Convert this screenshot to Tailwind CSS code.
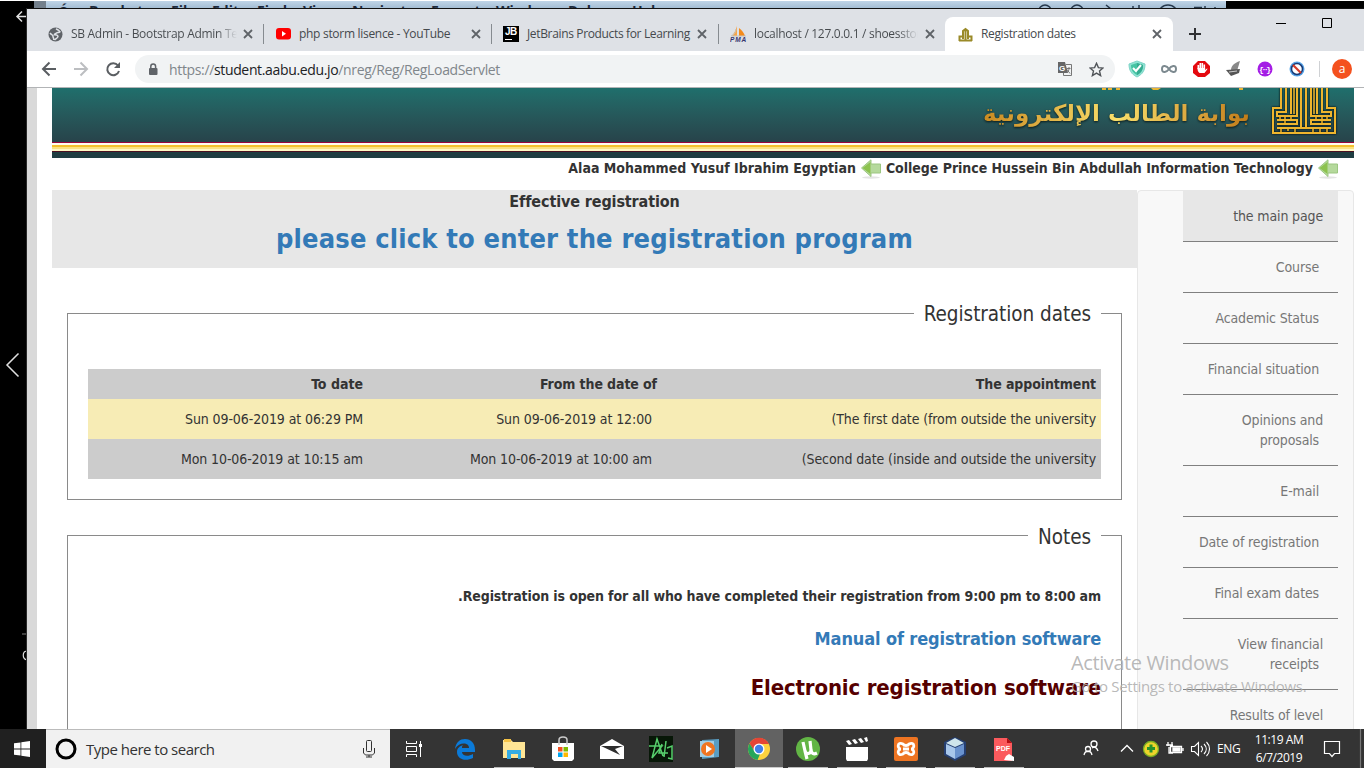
<!DOCTYPE html>
<html lang="en"><head><meta charset="utf-8"><title>Registration dates</title>
<script src="https://cdn.jsdelivr.net/npm/@tailwindcss/browser@4"></script></head>
<body class="bg-white">
<div class="relative flex h-[768px] w-[1366px] flex-col overflow-hidden bg-white pt-px font-['Open_Sans',sans-serif]">
  <!-- strip of the desktop behind the browser -->
  <div class="flex h-[7px] w-[1364px] shrink-0 overflow-hidden bg-black">
    <div class="ml-[34px] w-3 bg-[#74808c]"></div>
    <div class="relative w-[1180px] overflow-hidden bg-gradient-to-b from-[#c0d5e8] to-[#a5bed4] text-[14px] leading-[18px] font-bold text-[#1c2a3c]">
      <span class="absolute left-[12px] top-0.5">Ó</span><span class="absolute left-[43px] top-px">Brackets</span><span class="absolute left-[125px] top-px">File</span><span class="absolute left-[166px] top-px">Edit</span><span class="absolute left-[211px] top-px">Find</span><span class="absolute left-[257px] top-px">View</span><span class="absolute left-[306px] top-px">Navigate</span><span class="absolute left-[385px] top-px">Emmet</span><span class="absolute left-[450px] top-px">Window</span><span class="absolute left-[522px] top-px">Debug</span><span class="absolute left-[586px] top-px">Help</span>
      <svg class="absolute left-[985px] top-0" width="190" height="7" fill="none" stroke="#26384c" stroke-width="1.5"><circle cx="14" cy="10" r="6"/><circle cx="46" cy="10" r="6"/><path d="m75 4 5 4M102 5v3M108 4v4"/><circle cx="137" cy="14" r="10"/><path d="M163 6.500h8M174 5v4M184 6v2"/></svg>
    </div>
  </div>
  <div class="flex h-[721px] shrink-0">
    <!-- visible edge of the window underneath -->
    <aside class="flex w-[27px] shrink-0 flex-col overflow-hidden border-r border-[#2a2a2a] bg-black">
      <svg width="27" height="721" fill="none" stroke="#e0e0e0" stroke-width="1.5"><path d="M27 8.500H17m5-5-5 5 5 5"/><path d="M18.500 345.500 7 357l11.500 11.500"/><path stroke="#555" d="M22 626h5"/><path stroke-width="1.200" d="M27 643.500c-5-2-5 9 0 8"/></svg>
    </aside>
    <main class="flex w-[1337px] flex-col border-t border-[#111]">
      <!-- tab strip -->
      <div class="flex h-[42px] shrink-0 items-end bg-[#dee1e6] text-[12px] tracking-[-0.3px] text-[#45494d]">
        <div class="flex h-[34px] w-[237px] items-center pl-[21px]">
          <svg width="15" height="15" viewBox="0 0 15 15"><circle cx="7.500" cy="7.500" r="7" fill="#5f6368"/><path d="M8 1.800c1.500.8 3 1.500 4 3-1 1.200-2.500.2-3.500 1.200-1 1-2.200.5-2.200 1.800 2 .2 3.500.2 3.700 1.700-.2 1.500-2 2-3.500 3.500M2 6c1.500 2 3 1.500 3 3.500 0 1 1 1.500.8 3.500" stroke="#dee1e6" stroke-width="1.500" fill="none"/></svg>
          <span class="ml-2 w-[166px] overflow-hidden whitespace-nowrap bg-gradient-to-r from-[#45494d] from-88% to-transparent bg-clip-text text-transparent">SB Admin - Bootstrap Admin Template</span>
          <svg class="ml-[6px]" width="10" height="10"><path d="m1 1 8 8M9 1l-8 8" stroke="#5f6368" stroke-width="1.800"/></svg>
        </div>
        <div class="flex h-[34px] w-[228px] items-center"><i class="-ml-px h-5 w-px bg-[#868b90]"></i>
          <svg class="ml-3" width="15" height="12"><rect width="15" height="11.500" rx="3" fill="#f00"/><path d="m6 3 4 2.700L6 8.500z" fill="#fff"/></svg>
          <span class="ml-2 w-[166px] whitespace-nowrap">php storm lisence - YouTube</span>
          <svg class="ml-[6px]" width="10" height="10"><path d="m1 1 8 8M9 1l-8 8" stroke="#5f6368" stroke-width="1.800"/></svg>
        </div>
        <div class="flex h-[34px] w-[227px] items-center"><i class="-ml-px h-5 w-px bg-[#868b90]"></i>
          <div class="ml-[11px] flex h-4 w-4 flex-col items-start bg-black pl-[2px] font-['Liberation_Sans',sans-serif] text-[10px] leading-[11px] font-bold tracking-[-0.500px] text-white">JB<i class="mt-0.5 h-px w-[7px] bg-white"></i></div>
          <span class="ml-2 w-[165px] whitespace-nowrap tracking-[-0.350px]">JetBrains Products for Learning</span>
          <svg class="ml-[5px]" width="10" height="10"><path d="m1 1 8 8M9 1l-8 8" stroke="#5f6368" stroke-width="1.800"/></svg>
        </div>
        <div class="flex h-[34px] w-[226px] items-center"><i class="-ml-px h-5 w-px bg-[#868b90]"></i>
          <svg class="ml-[11px]" width="17" height="16"><path d="M7 0v10H2C4 7 6 4 7 0z" fill="#f7a64a"/><path d="M9 2c3 2 5 5 6 8H9z" fill="#f48b1c"/><path d="M1 10c3-1 5-4 5-7M2 10h14" stroke="#c8c2bc" fill="none"/><text x="0" y="16" font-family="Liberation Sans" font-size="6.500" font-weight="bold" font-style="italic" fill="#35356e" textLength="16">PMA</text></svg>
          <span class="ml-[7px] w-[164px] overflow-hidden whitespace-nowrap bg-gradient-to-r from-[#45494d] from-88% to-transparent bg-clip-text text-transparent">localhost / 127.0.0.1 / shoesstore</span>
          <svg class="ml-[7px]" width="10" height="10"><path d="m1 1 8 8M9 1l-8 8" stroke="#5f6368" stroke-width="1.800"/></svg>
        </div>
        <div class="flex h-[34px] w-[228px] items-center rounded-t-lg bg-white pl-[13px]">
          <svg width="15" height="15" fill="none" stroke="#9a8a28" stroke-width="2"><path d="M1.500 14V9.500h2.500M13.500 14V9.500H11M1 13.500h13M5 12V4l2.500-2L10 4v8M7.500 3v10"/></svg>
          <span class="ml-2 w-[165px] whitespace-nowrap tracking-[-0.350px]">Registration dates</span>
          <svg class="ml-[6px]" width="10" height="10"><path d="m1 1 8 8M9 1l-8 8" stroke="#5f6368" stroke-width="1.800"/></svg>
        </div>
        <svg class="ml-4 self-start" width="150" height="42" fill="none" stroke="#303134"><path d="M0 25h12M6 19v12" stroke-width="2"/><path d="M87 14.500h10M133.500 9.500h9v9h-9z" stroke="#000"/></svg>
      </div>
      <!-- toolbar -->
      <div class="flex h-[37px] shrink-0 items-center border-b border-[#b2b4b6] bg-white pl-[14px]">
        <svg width="82" height="18" fill="none" stroke="#5a5e62" stroke-width="2"><path d="M15 9H2m6.500-6.500L2 9l6.500 6.500"/><path d="M33 9h13m-6.500-6.500L46 9l-6.500 6.500" stroke="#bcbec1"/><path d="M77 5.500A6 6 0 1 0 78 11"/><path d="M79 2v6h-6z" fill="#5a5e62" stroke="none"/></svg>
        <div class="ml-[12px] flex h-7 w-[980px] items-center rounded-full bg-[#f1f3f4] pl-[13px]">
          <svg width="10" height="13"><rect x="1" y="5" width="8.500" height="7" rx="1" fill="#5f6368"/><path d="M2.800 5V3.500a2.400 2.400 0 0 1 4.800 0V5" fill="none" stroke="#5f6368" stroke-width="1.500"/></svg>
          <span class="ml-[11px] w-[879px] whitespace-nowrap text-[14px] tracking-[-0.350px] text-[#80868b]">https://<b class="font-normal text-[#202124]">student.aabu.edu.jo</b>/nreg/Reg/RegLoadServlet</span>
          <svg class="ml-[9px]" width="16" height="14"><path d="M1 0h7l3 11H1z" fill="#666"/><text x="2" y="8.500" font-family="Liberation Sans" font-size="8" font-weight="bold" fill="#fff">G</text><path d="M9 2.500h5.500v11H6.500V11" fill="none" stroke="#777"/><path d="M9.500 6.500h4M12 5v1.500c0 2-1 3-2 4m0-3 3 4" stroke="#777" fill="none"/></svg>
          <svg class="ml-[16px]" width="15" height="15"><path d="m7.500 1.300 1.900 4.300 4.600.4-3.500 3 1.100 4.600-4.100-2.500-4.100 2.500L4.500 9 1 6l4.600-.4z" fill="none" stroke="#505458" stroke-width="1.400"/></svg>
        </div>
        <svg class="ml-[12px]" width="230" height="22" viewBox="0 0 230 22">
          <path d="m10 3 8 3c0 6-2 10-8 13C4 16 2 12 2 6z" fill="#8fe3d2" stroke="#7fd4c8"/><path d="m10 5 6 2c0 5-2 8-6 10-4-2-6-5-6-10z" fill="#45c4a3"/><path d="m10 5 6 2c0 5-2 8-6 10z" fill="#35ab91"/><path d="m6 10 3 3 5-6" stroke="#fff" stroke-width="2" fill="none"/>
          <path d="M42 11c-2-3-7-5-7 0s5 3 7 0 7-5 7 0-5 3-7 0z" fill="none" stroke="#7c898f" stroke-width="2"/>
          <path d="M71 3h7l5 5v7l-5 4h-7l-5-4V8z" fill="#e4090f"/><path d="M71.300 11V7m2 4V5m2 6V5m2 6V6.500" stroke="#fff" stroke-width="1.600" fill="none"/><path d="M70.500 10h7.600v2l1.900-1.500c.8 0 .5 1-2.500 4.500h-5c-1.500-1-2-3-2-5z" fill="#fff"/>
          <path d="M113 3c-6 2-9 5-9 9l6 1z" fill="#888"/><path d="m99 12 14-1-1 4-8 3z" fill="#555"/><path d="m102 14 8-1" stroke="#ccc"/>
          <circle cx="138" cy="11" r="7.500" fill="#a41de5"/><text x="132" y="13.500" font-family="Liberation Mono" font-size="8" font-weight="bold" fill="#fff" textLength="12">{··}</text>
          <circle cx="170" cy="11" r="7.500" fill="#55a4e8"/><circle cx="170" cy="11" r="5.500" fill="#fff" stroke="#183a75" stroke-width="1.500"/><path d="m166 7 8 8" stroke="#d43b28" stroke-width="2.200"/>
          <path d="M192.500 3v16" stroke="#cfd1d4"/><circle cx="215" cy="11" r="10" fill="#f4511e"/><text x="215" y="15" text-anchor="middle" font-family="Open Sans" font-size="12" fill="#fff">a</text>
        </svg>
      </div>
      <!-- page -->
      <div class="flex h-[641px] overflow-hidden bg-white font-['DejaVu_Sans_Condensed','Noto_Sans',sans-serif] text-[#333]">
        <div class="w-[10px] shrink-0 bg-[#d9d9d9]"></div>
        <div class="ml-[15px] w-[1302px]">
          <header class="relative h-[54px] overflow-hidden bg-gradient-to-b from-[#1f6f6c] to-[#27434a]">
            <h1 dir="rtl" class="absolute top-[8px] right-[104px] whitespace-nowrap bg-gradient-to-r from-[#c98a20] via-[#f9e06a] to-[#c07b16] bg-clip-text font-['DejaVu_Sans',sans-serif] text-[23px] leading-[34px] font-bold text-transparent drop-shadow-[0_1px_1px_#0a1a1a]">بوابة الطالب الإلكترونية</h1>
            <svg class="absolute left-[1040px] top-0" width="160" height="4" fill="#e8b534"><path d="M10 0h4v2h-4zM16 0h4v2h-4zM24 0h4v2h-4zM59 0h10l-3 2h-5zM147 0h4v2h-4z"/></svg>
            <svg class="absolute right-[17px] top-0 drop-shadow-[0_0_1px_#000]" width="66" height="48" fill="none" stroke="#eeb52d" stroke-width="2"><path d="M10 0v20H2v25h62V20h-8V0M15 0v24H6v4h20V0M51 0v24h9v4H40V0M20 0v26M46 0v26M30 0v40M35 0v40M6 32h20v4H6M60 32H40v4h20M6 40h54"/><path stroke-width="1.500" d="M23 0v26M43 0v26M9 28v4M14 28v8M20 28v4M45 28v4M51 28v8M56 28v4M10 40v4M17 40v3M24 40v4M42 40v4M49 41v3M56 40v4"/></svg>
          </header>
          <div class="h-px bg-[#98063b]"></div><div class="h-[2px] bg-[#fffdf0]"></div><div class="h-[2px] bg-[#f5c12e]"></div><div class="h-[2px] bg-[#fbe281]"></div><div class="h-[2px] bg-[#fff9c4]"></div><div class="h-px bg-[#4a1020]"></div><div class="h-[6px] bg-[#1f3d42]"></div>
          <div class="flex h-[32px] justify-end pt-px pr-4 text-[14px] leading-[18px] font-bold tracking-[-0.030px]">
            <span class="whitespace-nowrap tracking-normal">Alaa Mohammed Yusuf Ibrahim Egyptian</span>
            <svg class="mx-[5px]" width="20" height="20"><ellipse cx="10" cy="18.500" rx="9" ry="1.200" fill="#e4e4e4"/><path d="M.5 9 10 .8V5h9.500v9H10v3.500z" fill="#b5d99c" stroke="#9cc681"/><path d="m1.500 9 8-6v12z" fill="#8cc24e"/></svg>
            <span class="whitespace-nowrap">College Prince Hussein Bin Abdullah Information Technology</span>
            <svg class="ml-[5px]" width="20" height="20"><ellipse cx="10" cy="18.500" rx="9" ry="1.200" fill="#e4e4e4"/><path d="M.5 9 10 .8V5h9.500v9H10v3.500z" fill="#b5d99c" stroke="#9cc681"/><path d="m1.500 9 8-6v12z" fill="#8cc24e"/></svg>
          </div>
          <div class="flex">
            <section class="w-[1085px]">
              <div class="h-[78px] bg-[#e7e7e7] pt-px text-center">
                <p class="text-[16px] leading-[22px] font-bold tracking-[-0.120px]">Effective registration</p>
                <p class="text-[27px] leading-[52px] font-bold tracking-[0.170px] text-[#337ab7]">please click to enter the registration program</p>
              </div>
              <fieldset class="mx-[15px] mt-[31px] h-[201px] border border-[#8a8a8a] px-5 text-[14px]" dir="rtl">
                <legend class="px-[10px] pt-px text-[20.5px] leading-[28px] tracking-[-0.050px]">Registration dates</legend>
                <table class="mt-[41px] w-[1013px] table-fixed text-right whitespace-nowrap tracking-[-0.100px]">
                  <colgroup><col class="w-[439px]"><col class="w-[294px]"><col></colgroup>
                  <thead><tr class="h-[30px] bg-[#ccc]"><th class="pr-[5px]">The appointment</th><th class="pr-[5px]">From the date of</th><th class="pr-[5px] tracking-normal">To date</th></tr></thead>
                  <tbody><tr class="h-10 bg-[#f7ecb5]"><td class="pr-[5px]"><bdi dir="ltr">(The first date (from outside the university</bdi></td><td class="pr-[10px]">Sun 09-06-2019 at 12:00</td><td class="pr-[5px]">Sun 09-06-2019 at 06:29 PM</td></tr>
                  <tr class="h-10 bg-[#ccc]"><td class="pr-[5px]"><bdi dir="ltr">(Second date (inside and outside the university</bdi></td><td class="pr-[10px]">Mon 10-06-2019 at 10:00 am</td><td class="pr-[5px]">Mon 10-06-2019 at 10:15 am</td></tr></tbody>
                </table>
              </fieldset>
              <fieldset class="mx-[15px] mt-[21px] h-[230px] border border-[#8a8a8a] px-5 font-bold" dir="rtl">
                <legend class="px-[10px] pt-[3px] text-[20.5px] leading-[26px] font-normal tracking-[-0.050px]">Notes</legend>
                <p class="mt-[36px] text-[14px] leading-5 tracking-[-0.120px]">Registration is open for all who have completed their registration from 9:00 pm to 8:00 am.</p>
                <p class="mt-[21px] text-[18px] leading-6 tracking-[-0.130px] text-[#337ab7]">Manual of registration software</p>
                <p class="mt-[22px] text-[22px] leading-[30px] tracking-[-0.160px] text-[#560000]">Electronic registration software</p>
              </fieldset>
            </section>
            <nav class="h-[560px] w-[217px] rounded-t border border-[#e7e7e7] bg-[#f8f8f8] pl-[45px] pr-[15px] text-right text-[14px] leading-5 tracking-[-0.140px] text-[#777]">
              <div class="h-[51px] border-b border-[#808080] bg-[#e7e7e7] pt-[15px] pr-[15px] text-[#555]">the main page</div>
              <div class="h-[51px] border-b border-[#808080] pt-[15px] pr-[19px]">Course</div>
              <div class="h-[51px] border-b border-[#808080] pt-[15px] pr-[19px]">Academic Status</div>
              <div class="h-[51px] border-b border-[#808080] pt-[15px] pr-[19px]">Financial situation</div>
              <div class="h-[71px] border-b border-[#808080] pt-[15px] pr-[15px]">Opinions and<br><span class="pr-1">proposals</span></div>
              <div class="h-[51px] border-b border-[#808080] pt-[15px] pr-[19px]">E-mail</div>
              <div class="h-[51px] border-b border-[#808080] pt-[15px] pr-[19px]">Date of registration</div>
              <div class="h-[51px] border-b border-[#808080] pt-[15px] pr-[19px]">Final exam dates</div>
              <div class="h-[71px] border-b border-[#808080] pt-[15px] pr-[15px]">View financial<br><span class="pr-1">receipts</span></div>
              <div class="h-[51px] pt-[15px] pr-[15px]">Results of level</div>
            </nav>
          </div>
        </div>
      </div>
    </main>
  </div>
  <!-- activation watermark -->
  <div class="absolute left-[1071px] top-[650px] whitespace-nowrap text-[#b0b0b0]/90">
    <p class="text-[20px] leading-[26px] tracking-[-0.400px]">Activate Windows</p><p class="text-[15px] leading-[20px] tracking-[-0.300px]">Go to Settings to activate Windows.</p>
  </div>
  <!-- taskbar -->
  <footer class="flex h-[39px] w-[1364px] shrink-0 overflow-hidden bg-[#343434] text-white">
    <div class="flex w-[46px] shrink-0 items-center bg-[#202020] pl-[14px]"><svg width="16" height="16" fill="#fff"><path d="m0 2.300 6.500-.9v6.200H0zM7.300 1.300 16 0v7.600H7.300zM0 8.400h6.500v6.200L0 13.700zM7.300 8.400H16V16l-8.700-1.300z"/></svg></div>
    <div class="flex w-[344px] shrink-0 items-center border-t border-[#bbb] bg-[#f1f1f1] pl-[9px] text-[#333]">
      <svg width="22" height="22"><circle cx="11" cy="11" r="9" fill="none" stroke="#000" stroke-width="3"/></svg>
      <span class="ml-[9px] w-[276px] text-[15px] tracking-[-0.500px]">Type here to search</span>
      <svg width="14" height="18" fill="none" stroke="#333"><rect x="4.500" y=".5" width="5" height="11" rx="1"/><path d="M1.500 8v5l2 2h7l2-2V8M7 15v2M4 17h6"/></svg>
    </div>
    <div class="flex w-[640px] shrink-0">
      <div class="flex w-[51px] shrink-0 items-center pl-[15px]"><svg width="18" height="18" fill="none" stroke="#fff"><path d="M1.500 1v2.500h10V1M1.500 17v-2.500h10V17M1.500 6.500h10v5h-10zM15.500 1v16"/><path d="M14 5.500h3" stroke-width="3"/></svg></div>
      <div class="flex w-12 shrink-0 items-center justify-center"><svg width="20" height="22"><path d="M0 11C1 4 5 1 10 1c6 0 10 4 10 11v2H7c0 4 6 5 11 2v4C10 24 2 21 2 14c0-4 3-6 6-7-1 1-1 2-1 3h7c0-6-10-6-14 1z" fill="#0b7ad8"/></svg></div>
      <div class="ml-px flex w-12 shrink-0 flex-col items-center pt-[9px]"><svg width="22" height="22"><path d="M0 2h8l2 2h12v16H0z" fill="#ffe595"/><path d="M1 1h7v3H1z" fill="#f6c346"/><path d="M4 12h14v9h-3v-5H8v5H4z" fill="#36ace3"/></svg><i class="mt-[7px] h-px w-10 bg-[#bbb]"></i></div>
      <div class="ml-px flex w-12 shrink-0 items-center justify-center"><svg width="24" height="26"><path d="M1 7h22v16l-2 2H3l-2-2z" fill="#fff"/><path d="M8 9V4c0-4 8-4 8 0v5" fill="none" stroke="#ccc" stroke-width="1.500"/><path d="M7 11h4.500v4.500H7z" fill="#f25022"/><path d="M12.500 11H17v4.500h-4.500z" fill="#7fba00"/><path d="M7 16.500h4.500V21H7z" fill="#00a4ef"/><path d="M12.500 16.500H17V21h-4.500z" fill="#ffb900"/></svg></div>
      <div class="ml-px flex w-12 shrink-0 items-center justify-center"><svg width="24" height="22"><path d="M0 8 12 1l12 7v13H0z" fill="#fff"/><path d="m1 8 19 9-5-6 8-3z" fill="#2e2e2e"/></svg></div>
      <div class="ml-px flex w-12 shrink-0 items-center justify-center"><svg width="24" height="26"><path d="M0 0h24v26H0z" fill="#071707"/><path d="M0 10h13L3 22 8 3l6 17M13 8l-3 9h9M17 5l-2 16M18 12l5-2v13l-4-1" stroke="#57cf6c" stroke-width="1.500" fill="none"/></svg></div>
      <div class="ml-px flex w-12 shrink-0 items-center justify-center"><svg width="22" height="22"><path d="m3 2 17-1v18l-17 2z" fill="#599dc2"/><path d="M1 3h14v16H1z" fill="#a2cee4"/><circle cx="9" cy="11" r="7" fill="#ef7521"/><path d="m7 7 6 4-6 4z" fill="#fff"/></svg></div>
      <div class="ml-px flex w-12 shrink-0 flex-col items-center bg-[#626262] pt-[8px]"><svg width="24" height="24"><circle cx="12" cy="12" r="11" fill="#fdd23e"/><path d="M2.500 6.500A11 11 0 0 1 22 7H12l-5 7z" fill="#e44536"/><path d="M2.500 6.500 8 15l5 2-2.500 6A11 11 0 0 1 2.500 6.500z" fill="#27a65b"/><circle cx="12" cy="12" r="5.500" fill="#fff"/><circle cx="12" cy="12" r="4.200" fill="#407fe8"/></svg><i class="mt-[6px] h-px w-12 bg-[#ccc]"></i></div>
      <div class="ml-px flex w-12 shrink-0 flex-col items-center pt-[8px]"><svg width="24" height="24"><circle cx="12" cy="12" r="12" fill="#62b545"/><path d="m7 5 2 9c1 4 6 3 6-1l-1-9m1 9c1 5 4 4 6 3M9 14l2 8" fill="none" stroke="#fff" stroke-width="3.200"/></svg><i class="mt-[6px] h-px w-10 bg-[#bbb]"></i></div>
      <div class="ml-px flex w-12 shrink-0 flex-col items-center pt-[8px]"><svg width="24" height="24"><path d="M1 10h22v12l-1 2H2l-1-2z" fill="#fff"/><path d="m1 4 3-1 3 4-3 1zM7 3l3-1 3 4-3 1zM13 2l3-1 3 4-3 1zM19 1l3-1 1 4-2 1z" fill="#fff"/></svg><i class="mt-[6px] h-px w-10 bg-[#bbb]"></i></div>
      <div class="ml-px flex w-12 shrink-0 flex-col items-center pt-[8px]"><svg width="24" height="24"><rect width="24" height="24" rx="2" fill="#ee7422"/><path d="M9 7c-6-3-6 5-2 5-4 0-4 8 2 5 1-2 5-2 6 0 6 3 6-5 2-5 4 0 4-8-2-5-1 2-5 2-6 0zM9 12h6" fill="none" stroke="#fff" stroke-width="2.800"/></svg><i class="mt-[6px] h-px w-10 bg-[#bbb]"></i></div>
      <div class="ml-px flex w-12 shrink-0 flex-col items-center pt-[8px]"><svg width="24" height="24"><path d="m12 0 11 5v13l-11 6-11-6V5z" fill="#253f72"/><path d="m12 1 9 5-9 4-9-4z" fill="#cfe5eb"/><path d="m3 7 9 4v11l-9-5z" fill="#a8c7eb"/><path d="m21 7-9 4v11l9-5z" fill="#6992ce"/></svg><i class="mt-[6px] h-px w-10 bg-[#bbb]"></i></div>
      <div class="ml-px flex w-12 shrink-0 flex-col items-center pt-[8px]"><svg width="20" height="24"><path d="M0 1h13l5 5v18H0z" fill="#fb5a5d"/><path d="M13 1v5h5z" fill="#b40d13"/><text x="2" y="14" font-family="Liberation Sans" font-size="7" font-weight="bold" fill="#fff" textLength="14">PDF</text><path d="m10 23 2-4 3-2 5 3v4z" fill="#fff"/></svg><i class="mt-[6px] h-px w-10 bg-[#bbb]"></i></div>
    </div>
    <svg class="ml-[53px] shrink-0" width="130" height="39" fill="none" stroke="#fff" stroke-width="1.300"><circle cx="11" cy="15" r="3"/><circle cx="5" cy="20" r="2.500"/><path d="M1 26c1-5 7-5 8 0M9 19c3-2 5 0 6 3"/><path d="m38 22.500 6-6 6 6"/><circle cx="68" cy="20" r="7.500" fill="#eed42b" stroke="#77ad24"/><path d="M68 15.500v8M64 19.500h8" stroke="#26922c" stroke-width="3"/><path d="M87.500 17.500h11v6h-11zM100 19v3M85 13v4M89 13v3M83 16h7M86 18v6h4"/><path d="M90 19h7v3h-7z" fill="#fff"/><path d="M108.500 17.500h3l4-4v13l-4-4h-3zM118 17c2 2 2 4 0 6M121 15c3 3 3 7 0 10M123.500 13c4 4 4 10 0 14" stroke-width="1.100"/></svg>
    <span class="ml-[4px] w-[25px] shrink-0 self-center text-[12px] tracking-[-0.400px]">ENG</span>
    <div class="ml-[8px] w-[58px] shrink-0 pt-[2px] text-center text-[12px] leading-[18px] tracking-[-0.450px]">11:19 AM<br>6/7/2019</div>
    <svg class="ml-[15px] shrink-0" width="41" height="39" fill="none" stroke="#fff" stroke-width="1.200"><path d="M1.500 12.500h15v12h-5l-2.500 3-2.500-3h-5z"/><path d="M37.500 0v39" stroke="#777"/></svg>
  </footer>
</div>
</body></html>
